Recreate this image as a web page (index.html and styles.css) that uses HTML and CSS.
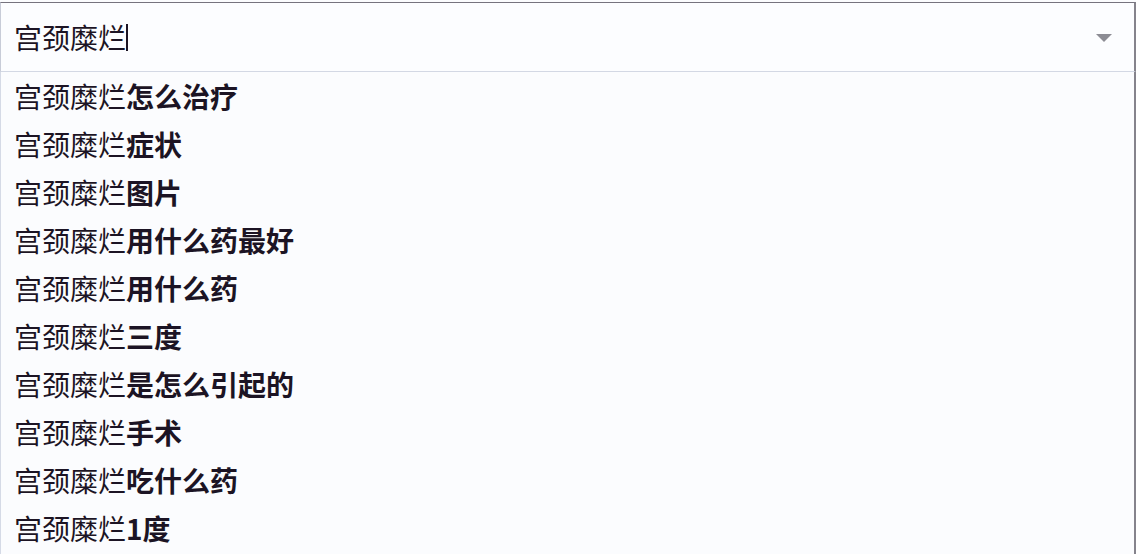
FILE: index.html
```html
<!DOCTYPE html>
<html lang="zh">
<head>
<meta charset="utf-8">
<title>搜索建议</title>
<link rel="stylesheet" href="styles.css">
</head>
<body>
<div class="box">
  <div class="search">
    <div class="query">宫颈糜烂<span class="caret"></span></div>
    <svg class="arrow" width="16" height="8" viewBox="0 0 16 8"><polygon points="0,0 16,0 8,8" fill="#8c8c94"/></svg>
  </div>
  <ul class="list">
    <li>宫颈糜烂<b>怎么治疗</b></li>
    <li>宫颈糜烂<b>症状</b></li>
    <li>宫颈糜烂<b>图片</b></li>
    <li>宫颈糜烂<b>用什么药最好</b></li>
    <li>宫颈糜烂<b>用什么药</b></li>
    <li>宫颈糜烂<b>三度</b></li>
    <li>宫颈糜烂<b>是怎么引起的</b></li>
    <li>宫颈糜烂<b>手术</b></li>
    <li>宫颈糜烂<b>吃什么药</b></li>
    <li>宫颈糜烂<b>1度</b></li>
  </ul>
</div>
</body>
</html>
```
FILE: styles.css
```css
html, body {
  margin: 0;
  padding: 0;
  background: #fbfcfe;
}
.box {
  width: 1136px;
  height: 554px;
  box-sizing: border-box;
  padding-top: 2px;
  background: #fbfcfe;
  font-family: "Noto Sans CJK SC", "Noto Sans", sans-serif;
  color: #1c1424;
  overflow: hidden;
}
.search {
  height: 70px;
  box-sizing: border-box;
  border-top: 1px solid #76737e;
  border-left: 1px solid #c8ccd8;
  border-right: 2px solid #85838c;
  border-bottom: 1px solid #d3d8e4;
  display: flex;
  align-items: center;
  justify-content: space-between;
  padding: 0 22px 0 13px;
  background: #fcfdff;
}
.query {
  font-size: 28px;
  line-height: 1;
  display: flex;
  align-items: center;
}
.caret {
  display: inline-block;
  width: 2px;
  height: 27px;
  margin-left: 0;
  background: #1c1424;
}
.arrow {
  display: block;
  margin-top: 2px;
}
.list {
  list-style: none;
  margin: 0;
  padding: 0;
  border-left: 1px solid #d5dae6;
  border-right: 2px solid #85838c;
  height: 482px;
}
.list li {
  height: 48px;
  line-height: 48px;
  font-size: 28px;
  padding-left: 13px;
  white-space: nowrap;
}
.list b {
  font-weight: 700;
}
```
